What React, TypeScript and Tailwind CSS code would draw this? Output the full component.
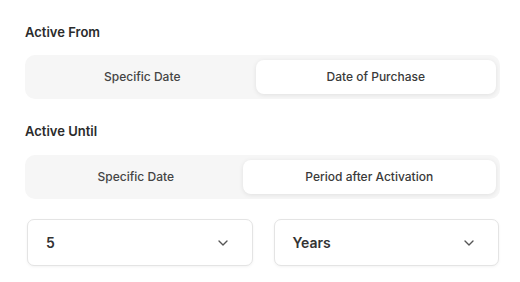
import { ChevronDown } from 'lucide-react'

type Option = { label: string; active?: boolean }

function Segmented({ options, cols }: { options: Option[]; cols: string }) {
  return (
    <div className={`grid w-[475px] ${cols} rounded-[10px] bg-[#f6f6f6] px-[4px] py-[5px]`}>
      {options.map((o) => (
        <button
          key={o.label}
          className={
            o.active
              ? 'h-[34px] rounded-[8px] bg-white text-[12px] font-medium text-[#3a3a3a] shadow-[0_1px_5px_rgba(0,0,0,0.09)]'
              : 'h-[34px] rounded-[8px] text-[12px] font-medium text-[#444]'
          }
        >
          {o.label}
        </button>
      ))}
    </div>
  )
}

function SelectBox({ value }: { value: string }) {
  return (
    <div className="flex h-[47px] items-center justify-between rounded-[7px] border border-[#e4e4e4] bg-white pl-[18px] pr-[21px] shadow-[0_1px_3px_rgba(0,0,0,0.05)]">
      <span className="text-[14px] font-semibold text-[#333]">{value}</span>
      <ChevronDown className="h-[16px] w-[16px] text-[#555]" strokeWidth={2} />
    </div>
  )
}

export default function App() {
  return (
    <div
      className="h-[282px] w-[520px] bg-white pl-[25px] pt-[24px]"
      style={{ fontFamily: 'Inter, "Noto Sans", sans-serif' }}
    >
      <div className="text-[13px] font-semibold leading-[16px] text-[#2b2b2b]">Active From</div>
      <div className="mt-[15px]">
        <Segmented
          cols="grid-cols-[227fr_241fr]"
          options={[{ label: 'Specific Date' }, { label: 'Date of Purchase', active: true }]}
        />
      </div>
      <div className="mt-[24px] text-[13px] font-semibold leading-[16px] text-[#2b2b2b]">Active Until</div>
      <div className="mt-[16px]">
        <Segmented
          cols="grid-cols-[214fr_254fr]"
          options={[{ label: 'Specific Date' }, { label: 'Period after Activation', active: true }]}
        />
      </div>
      <div className="ml-[2px] mt-[20px] grid w-[472px] grid-cols-2 gap-[21px]">
        <SelectBox value="5" />
        <SelectBox value="Years" />
      </div>
    </div>
  )
}
